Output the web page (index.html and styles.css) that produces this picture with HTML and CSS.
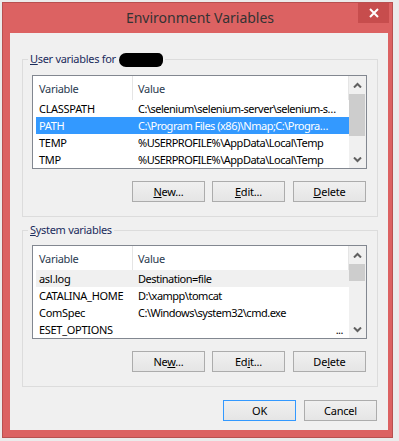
FILE: index.html
```html
<!DOCTYPE html>
<html lang="en">
<head>
    <meta charset="UTF-8">
    <title>Environment Variables</title>
    <link rel="stylesheet" href="styles.css">
</head>
<body>

<div class="window">
    <div class="titlebar">
        <span class="title">Environment Variables</span>
        <button class="close" aria-label="Close">
            <svg width="10" height="10" viewBox="0 0 10 10"><path d="M1 1L9 9M9 1L1 9" stroke="#fff" stroke-width="2"/></svg>
        </button>
    </div>

    <div class="client">
        <fieldset class="group">
            <legend><u>U</u>ser variables for <span class="redacted"></span></legend>
            <div class="listview">
                <div class="list-body">
                    <div class="list-head">
                        <div class="head-name">Variable</div>
                        <div class="head-value">Value</div>
                    </div>
                    <div class="row">
                        <div class="cell-name">CLASSPATH</div>
                        <div class="cell-value">C:\selenium\selenium-server\selenium-s…</div>
                    </div>
                    <div class="row selected">
                        <div class="cell-name">PATH</div>
                        <div class="cell-value">C:\Program Files (x86)\Nmap;C:\Progra…</div>
                    </div>
                    <div class="row">
                        <div class="cell-name">TEMP</div>
                        <div class="cell-value">%USERPROFILE%\AppData\Local\Temp</div>
                    </div>
                    <div class="row">
                        <div class="cell-name">TMP</div>
                        <div class="cell-value">%USERPROFILE%\AppData\Local\Temp</div>
                    </div>
                </div>
                <div class="vscroll">
                    <div class="sb-btn"><svg width="9" height="6" viewBox="0 0 9 6"><path d="M1 5.5L4.5 2L8 5.5" fill="none" stroke="#606060" stroke-width="2"/></svg></div>
                    <div class="sb-track"><div class="sb-thumb thumb-user"></div></div>
                    <div class="sb-btn"><svg width="9" height="6" viewBox="0 0 9 6"><path d="M1 0.5L4.5 4L8 0.5" fill="none" stroke="#606060" stroke-width="2"/></svg></div>
                </div>
            </div>
            <div class="btn-row">
                <button class="btn"><u>N</u>ew...</button>
                <button class="btn"><u>E</u>dit...</button>
                <button class="btn"><u>D</u>elete</button>
            </div>
        </fieldset>

        <fieldset class="group">
            <legend><u>S</u>ystem variables</legend>
            <div class="listview">
                <div class="list-body">
                    <div class="list-head">
                        <div class="head-name">Variable</div>
                        <div class="head-value">Value</div>
                    </div>
                    <div class="row inactive">
                        <div class="cell-name">asl.log</div>
                        <div class="cell-value">Destination=file</div>
                    </div>
                    <div class="row">
                        <div class="cell-name">CATALINA_HOME</div>
                        <div class="cell-value">D:\xampp\tomcat</div>
                    </div>
                    <div class="row">
                        <div class="cell-name">ComSpec</div>
                        <div class="cell-value">C:\Windows\system32\cmd.exe</div>
                    </div>
                    <div class="row">
                        <div class="cell-name">ESET_OPTIONS</div>
                        <div class="cell-value ellipsis">...</div>
                    </div>
                </div>
                <div class="vscroll">
                    <div class="sb-btn"><svg width="9" height="6" viewBox="0 0 9 6"><path d="M1 5.5L4.5 2L8 5.5" fill="none" stroke="#606060" stroke-width="2"/></svg></div>
                    <div class="sb-track"><div class="sb-thumb thumb-system"></div></div>
                    <div class="sb-btn"><svg width="9" height="6" viewBox="0 0 9 6"><path d="M1 0.5L4.5 4L8 0.5" fill="none" stroke="#606060" stroke-width="2"/></svg></div>
                </div>
            </div>
            <div class="btn-row">
                <button class="btn">Ne<u>w</u>...</button>
                <button class="btn">Ed<u>i</u>t...</button>
                <button class="btn">De<u>l</u>ete</button>
            </div>
        </fieldset>

        <div class="dialog-buttons">
            <button class="btn default">OK</button>
            <button class="btn">Cancel</button>
        </div>
    </div>
</div>

</body>
</html>
```

FILE: styles.css
```css
body {
    margin: 0;
    background-color: #ebebeb;
    font-family: "Noto Sans", sans-serif;
    font-size: 11px;
    letter-spacing: -0.3px;
    color: #000;
}
.window {
    margin: 2px 0 0 2px;
    width: 391px;
    box-sizing: border-box;
    background: #dc6262;
    border: 1px solid #b85050;
    padding: 0 4px 7px 7px;
}
.titlebar {
    display: flex;
    height: 30px;
    margin-left: -7px;
    margin-right: -4px;
}
.title {
    flex: 1;
    padding-left: 39px;
    text-align: center;
    font-size: 14px;
    letter-spacing: 0;
    line-height: 29px;
    color: #333;
}
.close {
    width: 31px;
    height: 20px;
    margin-right: 3px;
    border: none;
    padding: 0;
    background: #c74d4d;
    display: flex;
    align-items: center;
    justify-content: center;
}
.client {
    width: 378px;
    height: 397px;
    background: #f0f0f0;
    display: flex;
    flex-direction: column;
}
.group {
    margin: 19px 10px 0 12px;
    padding: 8px 10px 14px 9px;
    border: 1px solid #dcdcdc;
    min-width: 0;
}
.group + .group {
    margin-top: 6px;
}
.group legend {
    margin-left: -4px;
    padding: 0 2px;
    line-height: 14px;
    color: #1a2b5c;
}
.redacted {
    display: inline-block;
    width: 44px;
    height: 14px;
    margin-left: 1px;
    vertical-align: -4px;
    background: #000;
    border-radius: 7px 5px 6px 7px;
}
.listview {
    display: flex;
    height: 94px;
    box-sizing: border-box;
    border: 1px solid #828790;
    background: #fff;
}
.list-body {
    flex: 1;
    min-width: 0;
}
.list-head {
    display: flex;
    height: 24px;
    box-sizing: border-box;
    line-height: 17px;
    color: #2a3a50;
}
.head-name {
    width: 93px;
    padding: 4px 0 0 6px;
    border-right: 1px solid #e5e5e5;
}
.head-value {
    flex: 1;
    padding: 4px 0 0 5px;
    border-right: 1px solid #e5e5e5;
}
.row {
    display: flex;
    height: 17px;
    line-height: 18px;
    margin-left: 3px;
    white-space: nowrap;
}
.row.selected {
    background: #3399ff;
    color: #fff;
}
.row.inactive {
    background: #f0f0f0;
}
.cell-name {
    width: 94px;
    padding-left: 3px;
    flex: none;
}
.cell-value {
    flex: 1;
    min-width: 0;
    padding-left: 5px;
    overflow: hidden;
    letter-spacing: -0.5px;
}
.cell-value.ellipsis {
    text-align: right;
    padding-right: 6px;
}
.vscroll {
    width: 17px;
    flex: none;
    display: flex;
    flex-direction: column;
    background: #f0f0f0;
}
.sb-btn {
    height: 17px;
    display: flex;
    align-items: center;
    justify-content: center;
}
.sb-track {
    flex: 1;
}
.sb-thumb {
    margin: 1px 1px 0 0;
    background: #cdcdcd;
}
.thumb-user {
    height: 42px;
}
.thumb-system {
    height: 17px;
}
.btn-row {
    display: flex;
    justify-content: flex-end;
    gap: 7px;
    margin-top: 12px;
    padding-right: 1px;
}
.btn-row .btn:last-child {
    margin-left: 1px;
}
.btn {
    width: 73px;
    height: 21px;
    padding: 0;
    border: 1px solid #acacac;
    background: linear-gradient(#f0f0f0, #e5e5e5);
    font-family: inherit;
    font-size: 11px;
    letter-spacing: -0.2px;
    color: #000;
}
.btn.default {
    border-color: #3399ff;
}
.dialog-buttons {
    display: flex;
    justify-content: flex-end;
    gap: 8px;
    margin: 13px 11px 0 0;
}
```
